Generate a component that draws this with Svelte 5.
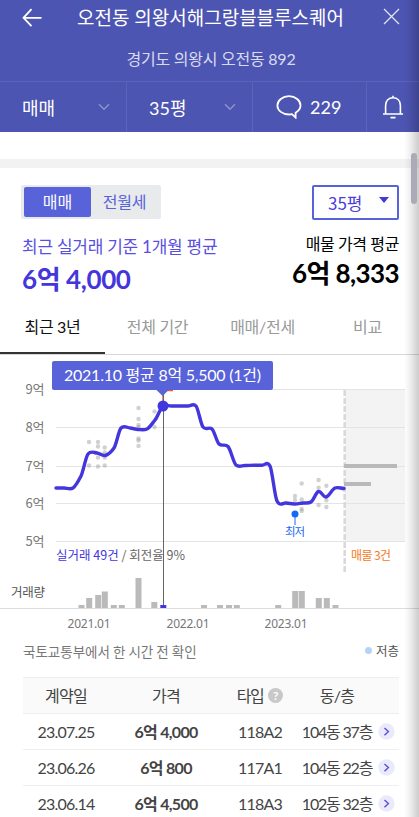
<script>
  const months = [
    [56, 488], [64, 488], [73, 488], [81, 476], [88, 454], [97, 453], [105, 455.5], [114, 448],
    [121, 428], [130, 428], [138, 429.5], [147, 429], [155, 420], [163, 406], [171, 406],
    [179, 406], [188, 406], [196, 406], [203, 427], [212, 429], [219, 444], [228, 446.5],
    [236, 465], [245, 465.5], [254, 465.3], [262, 465.3], [270, 466], [277, 501], [286, 503],
    [295, 504], [303, 503], [311, 502], [318.5, 491.5], [326, 497], [335, 488], [344, 488.5]
  ];

  function smooth(points) {
    const slopes = points.map((p, i) => {
      if (i === 0 || i === points.length - 1) return 0;
      return ((points[i + 1][1] - points[i - 1][1]) / (points[i + 1][0] - points[i - 1][0])) * 0.85;
    });
    let d = `M${points[0][0]} ${points[0][1]}`;
    for (let i = 1; i < points.length; i++) {
      const [x0, y0] = points[i - 1];
      const [x1, y1] = points[i];
      const h = (x1 - x0) / 3;
      d += `C${x0 + h} ${y0 + slopes[i - 1] * h} ${x1 - h} ${y1 - slopes[i] * h} ${x1} ${y1}`;
    }
    return d;
  }

  const line = smooth(months);
  const grid = [[389.5, '9억'], [427.5, '8억'], [466.5, '7억'], [503.5, '6억'], [541.5, '5억']];
  const dots = [
    [89, 442], [98, 442], [98, 446.5], [104.7, 447.5], [104.7, 452.5], [98, 457.5], [104.7, 457.5],
    [89, 465.5], [98, 466.5], [104.7, 465.5],
    [138.5, 408], [138.5, 419], [138.5, 425], [138.5, 427], [138.5, 438.5], [138.5, 440.5], [138.5, 446],
    [154.5, 411.5], [154.5, 427],
    [295, 496], [295, 500], [301.7, 483.5], [301.7, 499.5], [301.7, 509], [301.7, 511],
    [318.6, 480], [318.6, 487.7], [318.6, 505], [326.4, 485.7], [326.4, 500.3], [326.4, 507]
  ];
  const bars = [
    [78.5, 605], [86.2, 598], [95.2, 595], [101.8, 591.5], [110.8, 605], [118.8, 605], [135.5, 578],
    [151.3, 602], [201, 605], [217, 605], [226, 605], [233.8, 605], [275.2, 605], [292.2, 591],
    [298.8, 591], [315.8, 598], [323.8, 598], [332.5, 605]
  ];
  const deals = [
    ['23.07.25', '6억 4,000', '118A2', '104동 37층'],
    ['23.06.26', '6억 800', '117A1', '104동 22층'],
    ['23.06.14', '6억 4,500', '118A3', '102동 32층']
  ];
</script>

<div class="page">
  <header>
    <div class="top">
      <svg class="back" width="20" height="20" viewBox="0 0 20 20"><path d="M19.5 9.8H2M9.5 1.2L1.5 9.8L9.5 18.2" /></svg>
      <h1>오전동 의왕서해그랑블블루스퀘어</h1>
      <svg class="close" width="17" height="17" viewBox="0 0 17 17"><path d="M1 1L16 16M16 1L1 16" /></svg>
    </div>
    <p class="address">경기도 의왕시 오전동 892</p>
    <nav>
      <div class="pick"><span>매매</span><svg width="12" height="8" viewBox="0 0 12 8"><path d="M1 1.2L6 6.3L11 1.2" /></svg></div>
      <div class="pick"><span>35평</span><svg width="12" height="8" viewBox="0 0 12 8"><path d="M1 1.2L6 6.3L11 1.2" /></svg></div>
      <div class="talk">
        <svg width="26" height="24" viewBox="0 0 26 24"><path d="M19.6 22.6V17.8C22.6 16 24.5 13.5 24.5 10.5C24.5 5.5 19.5 1.2 13 1.2S1.4 5.4 1.4 10.5C1.4 15.5 6.5 19.5 13 19.5C14 19.5 15 19.4 16 19.2Z" /></svg>
        <span>229</span>
      </div>
      <div class="bell">
        <svg width="22" height="24" viewBox="0 0 22 24"><path d="M3.6 18.6V10.5C3.6 5.5 6.8 2.8 11 2.8S18.4 5.5 18.4 10.5V18.6M1 19H21M11 3V.8M8.5 22.6H13.5" /></svg>
      </div>
    </nav>
  </header>

  <div class="gap"></div>

  <section class="summary">
    <div class="controls">
      <div class="toggle"><b>매매</b><span>전월세</span></div>
      <div class="select"><span>35평</span><i></i></div>
    </div>
    <div class="prices">
      <div class="deal"><p>최근 실거래 기준 1개월 평균</p><strong>6억 4,000</strong></div>
      <div class="offer"><p>매물 가격 평균</p><strong>6억 8,333</strong></div>
    </div>
  </section>

  <div class="tabs">
    <span class="on">최근 3년</span><span>전체 기간</span><span>매매/전세</span><span>비교</span>
  </div>

  <svg class="chart" width="419" height="285" viewBox="0 355 419 285">
    <rect x="345" y="390" width="60" height="151" fill="#f3f3f3" />
    {#each grid as [y, label]}
      <path d="M56 {y}H405" stroke="#e4e4e4" />
      <text x="25.5" y={y + 4.5} font-size="13" textLength="19" fill="#777">{label}</text>
    {/each}
    <path d="M344.7 390V574" stroke="#d9d9d9" stroke-width="2.6" stroke-dasharray="6 2" />
    <rect x="344" y="464" width="53" height="4" fill="#b9b9b9" />
    <rect x="344" y="482" width="27" height="4" fill="#b9b9b9" />
    {#each dots as [x, y]}
      <circle cx={x} cy={y} r="2.2" fill="#999" fill-opacity=".45" />
    {/each}
    <text x="56" y="560" font-size="12.5" textLength="129" fill="#666"><tspan fill="#4336dc">실거래 49건</tspan> / 회전율 9%</text>
    <text x="351" y="560" font-size="12" textLength="40" fill="#f57a20">매물 3건</text>
    <path d="M0 608.5H419" stroke="#ddd" />
    {#each bars as [x, y]}
      <rect {x} {y} width="6" height={608 - y} fill="#bababa" />
    {/each}
    <rect x="160.3" y="605" width="6" height="3" fill="#4336dc" />
    <path d={line} fill="none" stroke="#4336dc" stroke-width="3.4" stroke-linecap="round" stroke-linejoin="round" />
    <path d="M163 391V402" stroke="#f4673c" stroke-width="1.5" />
    <path d="M163.5 394V605" stroke="#666" />
    <circle cx="163" cy="406" r="5.5" fill="#4336dc" />
    <path d="M295 514V525" stroke="#1769f5" />
    <circle cx="295" cy="514" r="3.5" fill="#1769f5" />
    <text x="285" y="536" font-size="11.5" textLength="20" fill="#1769f5">최저</text>
    <text x="11" y="597" font-size="12.5" textLength="34" fill="#555">거래량</text>
    <g class="dates" font-size="12" fill="#777">
      <text x="67.5" y="628" textLength="43">2021.01</text>
      <text x="166.5" y="628" textLength="43">2022.01</text>
      <text x="264.5" y="628" textLength="43">2023.01</text>
    </g>
    <rect x="166" y="389" width="7" height="2.2" fill="#f4512c" />
    <path d="M54 361H271Q273 361 273 363V388Q273 390 271 390H168.5L162.7 396L156.5 390H54Q52 390 52 388V363Q52 361 54 361Z" fill="#5862d9" />
    <text class="lato" x="64" y="380.5" font-size="16" textLength="197" fill="#fff">2021.10 평균 8억 5,500 (1건)</text>
  </svg>

  <div class="note"><span>국토교통부에서 한 시간 전 확인</span><span class="low"><i></i>저층</span></div>

  <div class="table">
    <div class="row head"><span>계약일</span><span>가격</span><span class="type">타입<i>?</i></span><span>동/층</span><span></span></div>
    {#each deals as [date, price, type, unit]}
      <div class="row">
        <span>{date}</span><b>{price}</b><span>{type}</span><span class="unit">{unit}</span>
        <svg width="17" height="17" viewBox="0 0 17 17"><circle cx="8.5" cy="8.5" r="8.2" fill="#ebeafb" /><path d="M6.5 5L10.4 8.6L6.5 12.2" fill="none" stroke="#5a4ede" stroke-width="1.4" /></svg>
      </div>
    {/each}
  </div>

  <div class="shade"></div>
  <div class="thumb"></div>
</div>

<style>
  .page {
    position: relative;
    width: 419px;
    height: 817px;
    overflow: hidden;
    background: #fff;
    font-family: Lato, "Noto Sans CJK KR", sans-serif;
    color: #444;
  }
  .page * { box-sizing: border-box; }
  h1, p { margin: 0; font-weight: 400; }
  span, strong, b, p, h1 { white-space: nowrap; }
  header { height: 132px; background: #4d55b2; color: #fff; display: flex; flex-direction: column; }
  header svg { fill: none; stroke: #fff; }
  .top { height: 36px; display: flex; align-items: center; padding: 0 19px 0 22px; justify-content: space-between; }
  h1 { font-size: 19px; line-height: 36px; margin-right: 4px; }
  .back { stroke-width: 1.8; }
  header .close { stroke: #e2e4f5; stroke-width: 1.3; margin-top: -3px; }
  .address { height: 45px; line-height: 46px; text-align: center; font-size: 16px; letter-spacing: -0.25px; color: #d9dbf0; padding-left: 3px; }
  nav { height: 51px; display: flex; border-top: 1px solid #5c64ba; font-size: 18px; }
  nav > div { display: flex; align-items: center; border-right: 1px solid #5c64ba; }
  nav .pick { width: 126px; justify-content: space-between; padding: 0 16px 0 22px; }
  .pick svg { stroke: #8e93cf; stroke-width: 1.4; }
  nav .pick:first-child { width: 127px; }
  nav .talk { width: 114px; gap: 8px; padding-left: 23px; }
  .talk svg { stroke-width: 1.8; }
  nav .bell { flex: 1; border: 0; padding-left: 15px; }
  .bell svg { stroke-width: 1.6; }
  .gap { height: 36px; border-top: 27px solid #fff; background: #f2f2f2; }
  .summary { height: 132px; padding: 17px 20px 0 21px; }
  .controls { display: flex; justify-content: space-between; height: 35px; }
  .toggle { width: 140px; height: 34px; padding: 2px 3px; background: #e9eaec; border-radius: 2px; display: flex; font-size: 16px; line-height: 30px; text-align: center; color: #5862d9; }
  .toggle b { width: 67px; background: #5862d9; color: #fff; font-weight: 400; border-radius: 2px; }
  .toggle span { flex: 1; letter-spacing: -0.3px; }
  .select { width: 87px; height: 35px; border: 2px solid #5862d9; border-radius: 2px; display: flex; justify-content: space-between; padding: 0 8px 0 14px; color: #4b3edb; font-family: "Noto Sans CJK KR", sans-serif; font-weight: 400; font-size: 17px; line-height: 32px; }
  .select i { border: 5px solid transparent; border-top: 6px solid #4336dc; border-bottom: 0; height: 0; margin-top: 10px; }
  .prices { display: flex; justify-content: space-between; }
  .deal { color: #4336dc; padding-left: 1px; }
  .deal p { color: #594fe0; font-size: 17px; letter-spacing: -0.25px; line-height: 24px; margin-top: 15px; }
  .prices strong { display: block; font-size: 26px; line-height: 34px; font-weight: 700; letter-spacing: -0.4px; }
  .deal strong { margin-top: 3px; }
  .offer { color: #000; text-align: right; }
  .offer p { font-size: 16px; letter-spacing: -0.4px; line-height: 24px; margin-top: 12px; }
  .prices .offer strong { letter-spacing: -0.6px; }
  .tabs { height: 55px; display: flex; border-bottom: 1px solid #d8d8d8; font-size: 16px; line-height: 54px; text-align: center; color: #999; }
  .tabs span { width: 105px; flex: none; height: 54px; letter-spacing: -0.3px; }
  .tabs .on { color: #111; border-bottom: 2px solid #333; }
  .chart { display: block; font-family: "Noto Sans CJK KR", sans-serif; }
  .dates { font-family: "Noto Sans", sans-serif; }
  .lato { font-family: Lato, "Noto Sans CJK KR", sans-serif; }
  .note { height: 37px; padding: 0 20px 0 23px; display: flex; justify-content: space-between; font-family: "Noto Sans CJK KR", sans-serif; font-size: 13.5px; line-height: 23px; color: #777; }
  .low { display: flex; align-items: center; height: 20px; gap: 4px; font-size: 12.5px; color: #555; }
  .low i { width: 7px; height: 7px; border-radius: 50%; background: #b5d3f5; }
  .table { margin: 0 20px 0 23px; border-top: 1px solid #eee; font-size: 16px; }
  .row { height: 36px; display: grid; grid-template-columns: 86px 114px 74px 80px 22px; align-items: center; text-align: center; border-bottom: 1px solid #eee; letter-spacing: -0.8px; line-height: 35px; }
  .row b { letter-spacing: -0.7px; }
  .row .unit { letter-spacing: -1.2px; }
  .row svg { margin-left: 1px; }
  .head { background: #fafafa; }
  .type { display: flex; align-items: center; justify-content: center; gap: 5px; letter-spacing: -1.5px; }
  .type i { width: 15px; height: 15px; border-radius: 50%; background: #c8c8c8; color: #fff; font: 700 12px/15px Lato, sans-serif; letter-spacing: 0; }
  .shade { position: absolute; top: 0; right: 0; width: 15px; height: 100%; background: linear-gradient(90deg, transparent, rgba(0, 0, 0, .06) 40%, rgba(0, 0, 0, .2)); }
  .thumb { position: absolute; left: 411px; top: 153px; width: 6px; height: 51px; border-radius: 3px; background: #aaabb7; }
</style>
